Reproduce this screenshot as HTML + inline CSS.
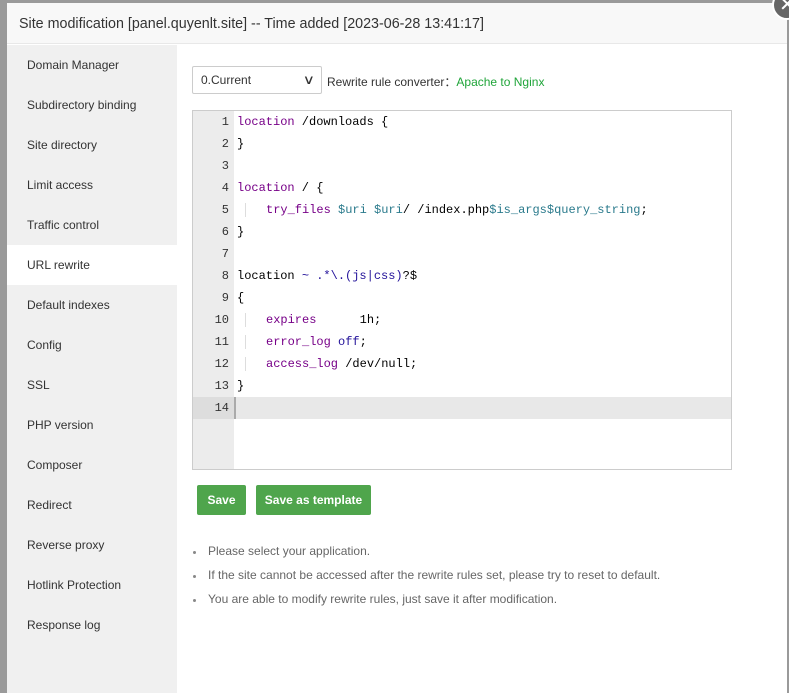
<!DOCTYPE html>
<html><head><meta charset="utf-8"><style>
*{margin:0;padding:0;box-sizing:border-box}
body{width:789px;height:688px;background:#9a9a9a;font-family:"Liberation Sans",sans-serif;position:relative;overflow:hidden}
.dlg{position:absolute;left:7px;top:3px;width:780px;height:690px;background:#fff}
.title{height:41px;background:#f8f8f8;border-bottom:1px solid #e8e8e8;font-size:14.3px;color:#333;line-height:42px;padding-left:12px}
.side{position:absolute;left:0;top:42px;width:170px;bottom:0;background:#f0f0f0}
.side div{height:40px;line-height:40px;padding-left:20px;font-size:12px;color:#333}
.side div.act{background:#fff}
.close{position:absolute;left:772px;top:-10px;width:30px;height:30px;border-radius:50%;background:#666;border:2px solid #fff;color:#fff;font-size:20px;line-height:26px;text-indent:5px}
.sel{position:absolute;left:192px;top:66px;width:130px;height:28px;border:1px solid #ccc;border-radius:2px;font-size:12px;line-height:26px;padding-left:8px;color:#333;background:#fff}
.sel span{position:absolute;right:7px;top:0;font-size:13px;transform:scaleX(1.3)}
.conv{position:absolute;left:327px;top:73px;font-size:12px;color:#333}
.conv b{color:#20a53a;font-weight:normal}
.ed{position:absolute;left:192px;top:110px;width:540px;height:360px;border:1px solid #ccc;background:#fff;overflow:hidden}
.gut{position:absolute;left:0;top:0;width:41px;height:100%;background:#ececec}
.ln{position:absolute;left:0;width:540px;height:22px;font-family:"Liberation Mono",monospace;font-size:12px;line-height:22px;white-space:pre;color:#000}
.ln i{font-style:normal;display:inline-block;width:36px;text-align:right;color:#333;margin-right:8px}
.k{color:#708}.v{color:#2a7a8c}.b{color:#219}.cur{background:#e8e8e8}
.g{border-left:1px solid #ddd;margin-left:8px;padding-left:20px}
.btn{position:absolute;top:485px;height:30px;background:#4fa54c;color:#fff;font-size:12px;font-weight:bold;line-height:30px;text-align:center;border-radius:2px}
ul{position:absolute;left:208px;top:544px;font-size:12px;color:#666;list-style:none}
ul li{height:24px;position:relative}
ul li:before{content:"";position:absolute;left:-15px;top:7px;width:3px;height:3px;border-radius:50%;background:#888}
</style></head><body>
<div class="dlg">
<div class="title">Site modification [panel.quyenlt.site] -- Time added [2023-06-28 13:41:17]</div>
<div class="side">
<div>Domain Manager</div><div>Subdirectory binding</div><div>Site directory</div><div>Limit access</div><div>Traffic control</div><div class="act">URL rewrite</div><div>Default indexes</div><div>Config</div><div>SSL</div><div>PHP version</div><div>Composer</div><div>Redirect</div><div>Reverse proxy</div><div>Hotlink Protection</div><div>Response log</div>
</div>
</div>
<div class="close">✕</div>
<div class="sel">0.Current<span>∨</span></div>
<div class="conv">Rewrite rule converter：<b>Apache to Nginx</b></div>
<div class="ed"><div class="gut"></div>
<div class="ln" style="top:0"><i>1</i><span class="k">location</span> /downloads {</div>
<div class="ln" style="top:22px"><i>2</i>}</div>
<div class="ln" style="top:44px"><i>3</i></div>
<div class="ln" style="top:66px"><i>4</i><span class="k">location</span> / {</div>
<div class="ln" style="top:88px"><i>5</i><span class="g"><span class="k">try_files</span> <span class="v">$uri</span> <span class="v">$uri</span>/ /index.php<span class="v">$is_args$query_string</span>;</span></div>
<div class="ln" style="top:110px"><i>6</i>}</div>
<div class="ln" style="top:132px"><i>7</i></div>
<div class="ln" style="top:154px"><i>8</i>location <span class="b">~ .*\.(js|css)</span>?$</div>
<div class="ln" style="top:176px"><i>9</i>{</div>
<div class="ln" style="top:198px"><i>10</i><span class="g"><span class="k">expires</span>      1h;</span></div>
<div class="ln" style="top:220px"><i>11</i><span class="g"><span class="k">error_log</span> <span class="b">off</span>;</span></div>
<div class="ln" style="top:242px"><i>12</i><span class="g"><span class="k">access_log</span> /dev/null;</span></div>
<div class="ln" style="top:264px"><i>13</i>}</div>
<div class="ln cur" style="top:286px;left:41px;width:500px;border-left:2px solid #aaa"></div>
<div class="ln" style="top:286px;width:41px;background:#ddd"><i>14</i></div>
</div>
<div class="btn" style="left:197px;width:49px">Save</div>
<div class="btn" style="left:256px;width:115px">Save as template</div>
<ul><li>Please select your application.</li><li>If the site cannot be accessed after the rewrite rules set, please try to reset to default.</li><li>You are able to modify rewrite rules, just save it after modification.</li></ul>
</body></html>
